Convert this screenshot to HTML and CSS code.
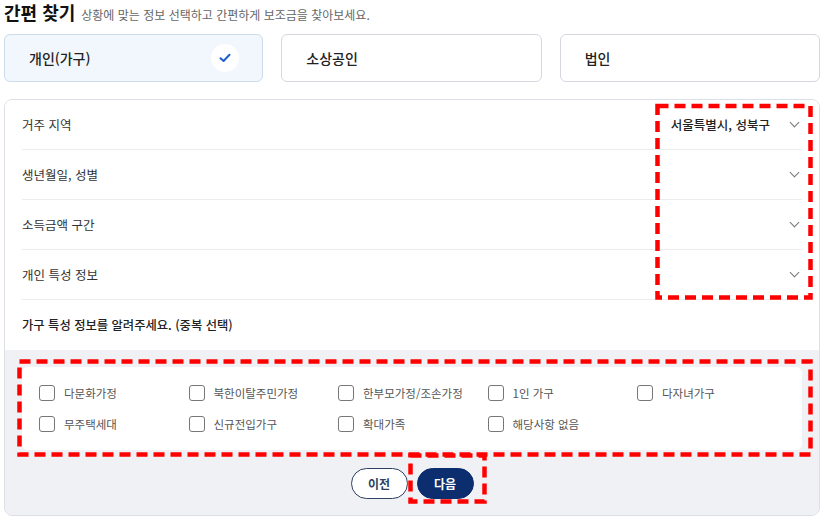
FILE: index.html
```html
<!DOCTYPE html>
<html lang="ko">
<head>
<meta charset="UTF-8">
<link rel="stylesheet" href="styles.css">
<title>간편 찾기</title>
</head>
<body>
	<div class="page">
		<div class="heading">
			<h2>간편 찾기</h2>
			<span class="sub">상황에 맞는 정보 선택하고 간편하게 보조금을 찾아보세요.</span>
		</div>

		<div class="tabs">
			<div class="tab active">
				<span>개인(가구)</span>
				<span class="check">
					<svg width="14" height="14" viewBox="0 0 14 14"><path d="M2.5 7.2 L5.6 10 L11.5 3.8" fill="none" stroke="#1d5fd1" stroke-width="2" stroke-linecap="round" stroke-linejoin="round"/></svg>
				</span>
			</div>
			<div class="tab"><span>소상공인</span></div>
			<div class="tab"><span>법인</span></div>
		</div>

		<div class="panel">
			<div class="rows">
				<div class="row">
					<span class="label">거주 지역</span>
					<span class="value">서울특별시, 성북구</span>
					<span class="chev"></span>
				</div>
				<div class="row">
					<span class="label">생년월일, 성별</span>
					<span class="value"></span>
					<span class="chev"></span>
				</div>
				<div class="row">
					<span class="label">소득금액 구간</span>
					<span class="value"></span>
					<span class="chev"></span>
				</div>
				<div class="row">
					<span class="label">개인 특성 정보</span>
					<span class="value"></span>
					<span class="chev"></span>
				</div>
				<div class="row last">
					<span class="label strong">가구 특성 정보를 알려주세요. (중복 선택)</span>
				</div>
			</div>

			<div class="options">
				<div class="optbox">
					<label class="opt"><span class="box"></span>다문화가정</label>
					<label class="opt"><span class="box"></span>북한이탈주민가정</label>
					<label class="opt"><span class="box"></span>한부모가정/조손가정</label>
					<label class="opt"><span class="box"></span>1인 가구</label>
					<label class="opt"><span class="box"></span>다자녀가구</label>
					<label class="opt"><span class="box"></span>무주택세대</label>
					<label class="opt"><span class="box"></span>신규전입가구</label>
					<label class="opt"><span class="box"></span>확대가족</label>
					<label class="opt"><span class="box"></span>해당사항 없음</label>
				</div>
				<div class="buttons">
					<button class="btn prev">이전</button>
					<button class="btn next">다음</button>
				</div>
			</div>
		</div>

		<svg class="marks" width="829" height="531" viewBox="0 0 829 531">
			<rect x="657.5" y="106" width="153" height="191.5"/>
			<rect x="19.5" y="361.5" width="791" height="93"/>
			<rect x="410.5" y="455.5" width="74" height="46"/>
		</svg>
	</div>
</body>
</html>
```

FILE: styles.css
```css
body{
	margin: 0;
	background: #ffffff;
	font-family: "Noto Sans CJK KR", "Noto Sans", sans-serif;
	color: #222;
}

.page{
	position: relative;
	width: 816px;
	height: 531px;
	padding-left: 4px;
}

.heading{
	display: flex;
	align-items: baseline;
	gap: 6px;
	height: 32px;
	padding-top: 2px;
}

.heading h2{
	margin: 0;
	font-size: 18px;
	line-height: 20px;
	font-weight: 700;
	color: #111;
}

.heading .sub{
	font-size: 12px;
	color: #666;
}

.tabs{
	display: flex;
	gap: 18px;
}

.tab{
	flex: 1;
	height: 46px;
	border: 1px solid #d5d8de;
	border-radius: 6px;
	display: flex;
	align-items: center;
	justify-content: space-between;
	padding: 0 24px;
	font-size: 14px;
	font-weight: 500;
	color: #222;
	box-sizing: content-box;
}

.tab.active{
	background: #f2f7fd;
	border-color: #cddbeb;
	padding-right: 23px;
}

.check{
	width: 28px;
	height: 28px;
	border-radius: 50%;
	background: #ffffff;
	display: flex;
	align-items: center;
	justify-content: center;
}

.panel{
	margin-top: 17px;
	border: 1px solid #dcdfe5;
	border-radius: 8px;
	overflow: hidden;
	height: 415px;
	display: flex;
	flex-direction: column;
}

.rows{
	padding: 0 17px;
	background: #ffffff;
}

.row{
	height: 49px;
	border-bottom: 1px solid #ececec;
	display: flex;
	align-items: center;
	font-size: 12.5px;
	color: #333;
}

.row.last{
	border-bottom: none;
	height: 50px;
}

.label{
	flex: 1;
}

.label.strong{
	font-size: 12.3px;
	font-weight: 500;
	color: #222;
}

.value{
	font-weight: 500;
	color: #222;
	margin-right: 21px;
}

.chev{
	width: 6px;
	height: 6px;
	border-right: 1.3px solid #777;
	border-bottom: 1.3px solid #777;
	transform: rotate(45deg);
	margin: -4px 4px 0 0;
}

.options{
	flex: 1;
	background: #f0f1f5;
	padding: 17px 17px 0;
}

.optbox{
	background: #ffffff;
	border-radius: 6px;
	height: 83px;
	box-sizing: border-box;
	padding: 18px 0 0 17px;
	display: grid;
	grid-template-columns: repeat(5, 149.5px);
	grid-auto-rows: 16px;
	row-gap: 15px;
}

.opt{
	display: flex;
	align-items: center;
	gap: 9px;
	font-size: 11.5px;
	color: #555;
}

.box{
	width: 14px;
	height: 14px;
	border: 1.3px solid #777;
	border-radius: 3px;
	background: #fff;
	flex: none;
}

.buttons{
	display: flex;
	justify-content: center;
	gap: 9px;
	margin-top: 18px;
}

.btn{
	width: 57px;
	height: 31px;
	border-radius: 16px;
	font-family: inherit;
	font-size: 12px;
	font-weight: 700;
	cursor: pointer;
}

.btn.prev{
	background: #ffffff;
	border: 1.3px solid #2d3f63;
	color: #2d3f63;
}

.btn.next{
	background: #0c2e6e;
	border: 1px solid #0c2e6e;
	color: #ffffff;
}

.marks{
	position: absolute;
	top: 0;
	left: 0;
	pointer-events: none;
}

.marks rect{
	fill: none;
	stroke: #ff0000;
	stroke-width: 4.5;
	stroke-dasharray: 11 6;
}
```
